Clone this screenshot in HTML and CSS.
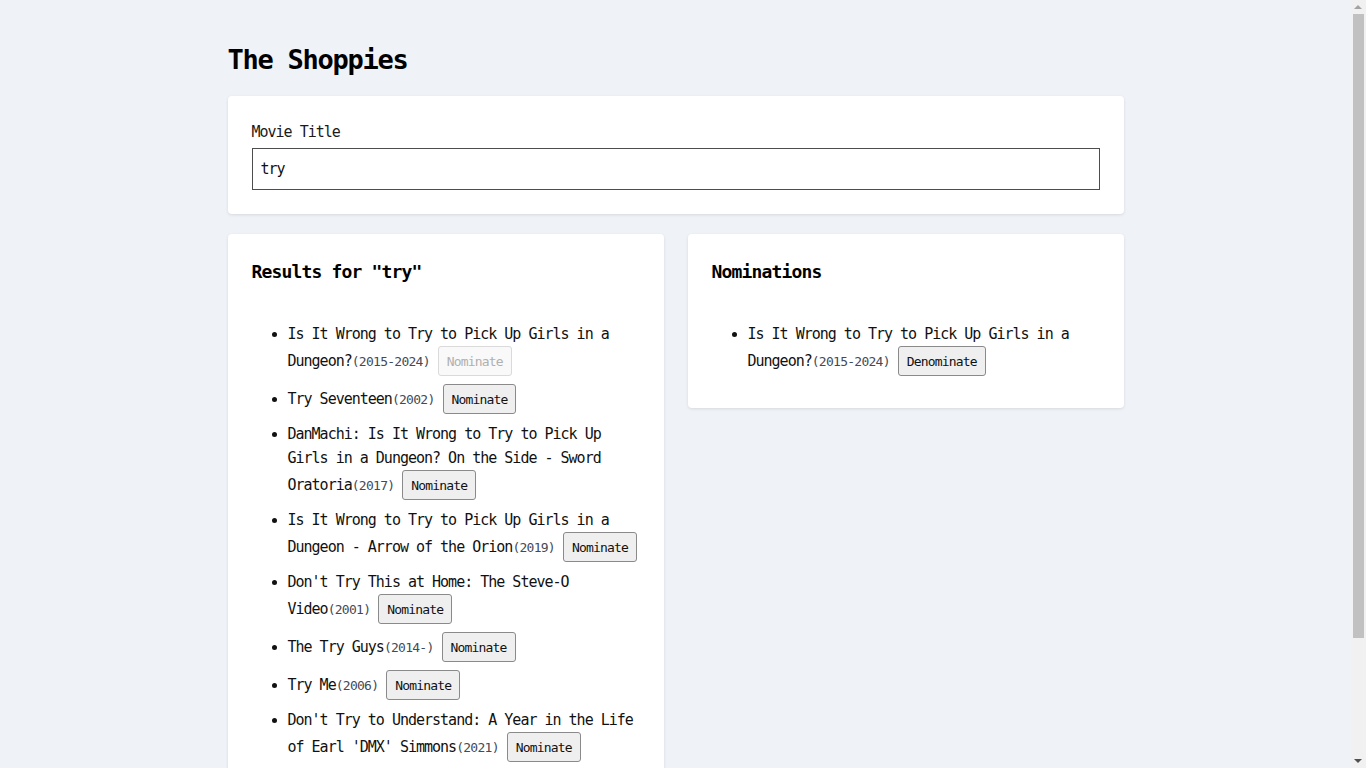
FILE: index.html
```html
<!DOCTYPE html>
<html lang="en">
<head>
<meta charset="utf-8">
<title>The Shoppies</title>
<link rel="stylesheet" href="styles.css">
</head>
<body>
<main class="page">
  <h1 class="title">The Shoppies</h1>
  <section class="card search">
    <label class="label" for="q">Movie Title</label>
    <input id="q" class="input" type="text" value="try">
  </section>
  <div class="columns">
    <section class="card">
      <h2 class="heading">Results for "try"</h2>
      <ul class="list">
        <li>Is It Wrong to Try to Pick Up Girls in a Dungeon?<span class="year">(2015-2024)</span><button class="btn" disabled>Nominate</button></li>
        <li>Try Seventeen<span class="year">(2002)</span><button class="btn">Nominate</button></li>
        <li>DanMachi: Is It Wrong to Try to Pick Up Girls in a Dungeon? On the Side - Sword Oratoria<span class="year">(2017)</span><button class="btn">Nominate</button></li>
        <li>Is It Wrong to Try to Pick Up Girls in a Dungeon - Arrow of the Orion<span class="year">(2019)</span><button class="btn">Nominate</button></li>
        <li>Don't Try This at Home: The Steve-O Video<span class="year">(2001)</span><button class="btn">Nominate</button></li>
        <li>The Try Guys<span class="year">(2014-)</span><button class="btn">Nominate</button></li>
        <li>Try Me<span class="year">(2006)</span><button class="btn">Nominate</button></li>
        <li>Don't Try to Understand: A Year in the Life of Earl 'DMX' Simmons<span class="year">(2021)</span><button class="btn">Nominate</button></li>
        <li>Try Harder!<span class="year">(2021)</span><button class="btn">Nominate</button></li>
        <li>Try Not to Breathe<span class="year">(2006)</span><button class="btn">Nominate</button></li>
      </ul>
    </section>
    <section class="card">
      <h2 class="heading">Nominations</h2>
      <ul class="list">
        <li>Is It Wrong to Try to Pick Up Girls in a Dungeon?<span class="year">(2015-2024)</span><button class="btn">Denominate</button></li>
      </ul>
    </section>
  </div>
</main>
<div class="scrollbar" aria-hidden="true">
  <span class="sb-up"></span>
  <span class="sb-thumb"></span>
  <span class="sb-down"></span>
</div>
</body>
</html>
```
FILE: styles.css
```css
html, body {
  margin: 0;
  padding: 0;
}
body {
  background: #eff2f7;
  font-family: "DejaVu Sans Mono", "Liberation Mono", monospace;
  font-size: 15px;
  letter-spacing: -1px;
  color: #111;
  padding-right: 15px;
}
.page {
  max-width: 896px;
  margin: 0 auto;
  padding: 40px 0 40px;
}
.title {
  margin: 0 0 16px;
  font-size: 27px;
  line-height: 40px;
  letter-spacing: -1.25px;
  font-weight: bold;
  color: #000;
}
.card {
  background: #fff;
  border-radius: 4px;
  box-shadow: 0 1px 3px rgba(30, 40, 60, 0.12);
  padding: 24px;
}
.search {
  display: flex;
  flex-direction: column;
}
.label {
  line-height: 24px;
  color: #1a1a1a;
  margin-bottom: 4px;
}
.input {
  box-sizing: border-box;
  height: 42px;
  border: 1px solid #4d4d4d;
  border-radius: 0;
  padding: 0 8px;
  font-family: inherit;
  font-size: 15px;
  letter-spacing: -1px;
  color: #111;
  outline: none;
}
.columns {
  display: flex;
  gap: 24px;
  align-items: flex-start;
  margin-top: 20px;
}
.columns .card {
  flex: 1 1 0;
  min-width: 0;
}
.heading {
  margin: 0;
  padding-top: 1px;
  font-size: 18px;
  line-height: 26px;
  letter-spacing: -0.84px;
  font-weight: bold;
  color: #000;
}
.list {
  margin: 37px 0 0;
  padding: 0 0 0 36px;
  list-style: disc;
}
.list li {
  line-height: 24px;
  margin-bottom: 8px;
}
.year {
  font-size: 13px;
  letter-spacing: -0.73px;
  color: #434a57;
}
.btn {
  box-sizing: border-box;
  height: 30px;
  margin-left: 8px;
  padding: 0 8px;
  vertical-align: middle;
  font-family: inherit;
  font-size: 13px;
  letter-spacing: -0.83px;
  color: #111;
  background: #efefef;
  border: 1px solid #8a8a8a;
  border-radius: 3px;
}
.btn:disabled {
  background: #f9f9f9;
  border-color: #dadada;
  color: #b0b0b0;
}

/* decorative classic scrollbar drawn over the right edge */
.scrollbar {
  position: fixed;
  top: 0;
  right: 0;
  width: 15px;
  height: 100vh;
  background: #f1f1f1;
}
.sb-up,
.sb-down {
  position: absolute;
  left: 3px;
  width: 0;
  height: 0;
  border-left: 4.5px solid transparent;
  border-right: 4.5px solid transparent;
}
.sb-up {
  top: 5px;
  border-bottom: 4px solid #a3a3a3;
}
.sb-down {
  bottom: 5px;
  border-top: 4px solid #505050;
}
.sb-thumb {
  position: absolute;
  left: 2px;
  right: 2px;
  top: 14px;
  height: 624px;
  background: #c1c1c1;
}
```
